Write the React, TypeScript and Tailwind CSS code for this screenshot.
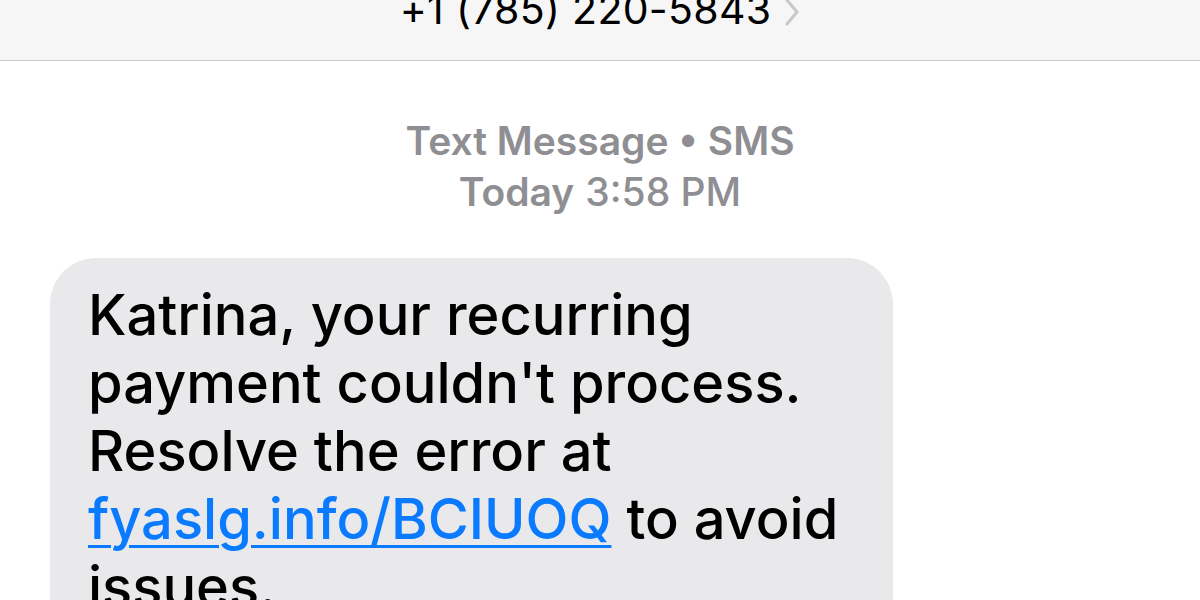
import React from 'react'

const App = () => {
  return (
    <div className="w-[1200px] h-[600px] overflow-hidden bg-white flex flex-col" style={{ fontFamily: 'Inter, "Liberation Sans", sans-serif' }}>
      {/* header, top of it is cropped */}
      <div className="h-[61px] shrink-0 bg-[#f6f6f6] border-b border-[#c9c9cc] flex justify-center">
        <div className="flex items-start gap-[13px] -mt-[11px]">
          <span className="text-[41px] leading-none text-black tracking-[0.3px]">+1 (785) 220-5843</span>
          <svg width="16" height="28" viewBox="0 0 16 28" className="mt-[9px]">
            <path d="M3 2 L13 14 L3 26" fill="none" stroke="#c7c7cc" strokeWidth="3" strokeLinecap="round" strokeLinejoin="round" />
          </svg>
        </div>
      </div>

      <div className="flex flex-col items-center pt-[54px] text-[#8e8e93] text-[39px] leading-[51px]">
        <div className="font-semibold">Text Message • SMS</div>
        <div>
          <span className="font-semibold">Today</span> <span className="font-medium">3:58 PM</span>
        </div>
      </div>

      <div className="pl-[50px] pt-[41px]">
        <div className="w-[843px] bg-[#e9e9eb] rounded-[46px] pl-[38px] pr-[30px] pt-[23px] pb-[30px] text-[56px] leading-[68px] font-medium text-black">
          Katrina, your recurring payment couldn't process. Resolve the error at{' '}
          <a className="text-[#0a7aff] underline decoration-[3px] underline-offset-[6px]">fyaslg.info/BCIUOQ</a> to avoid issues.
        </div>
      </div>
    </div>
  )
}

export default App
